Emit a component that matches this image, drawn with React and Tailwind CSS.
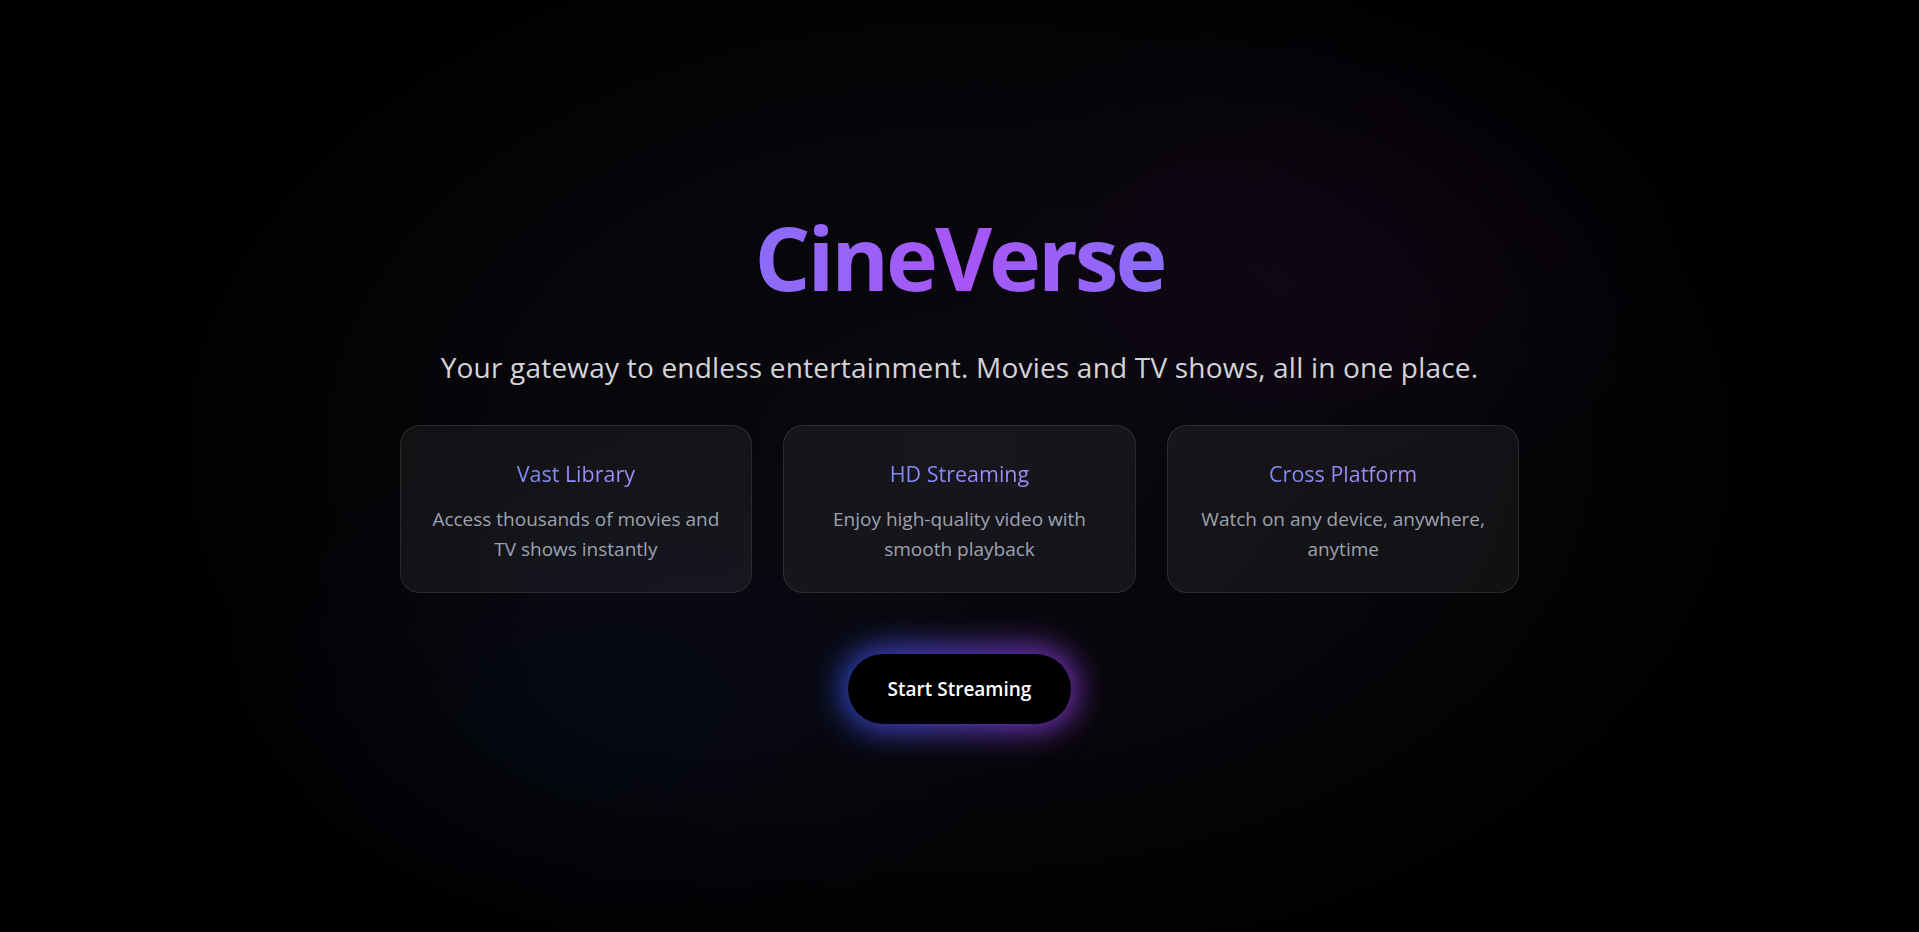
export default function App() {
  const features = [
    { title: "Vast Library", desc: "Access thousands of movies and TV shows instantly" },
    { title: "HD Streaming", desc: "Enjoy high-quality video with smooth playback" },
    { title: "Cross Platform", desc: "Watch on any device, anywhere, anytime" },
  ];
  return (
    <div className="min-h-screen w-full bg-black bg-[image:radial-gradient(ellipse_28%_38%_at_68%_28%,rgba(70,15,90,0.14),transparent_70%),radial-gradient(ellipse_30%_40%_at_32%_75%,rgba(20,45,110,0.12),transparent_70%),radial-gradient(ellipse_45%_62%_at_50%_48%,#0a0910_0%,#060509_55%,#000_100%)] flex items-center justify-center font-['Open_Sans',sans-serif]">
      <div className="flex flex-col items-center w-[1120px]">
        <h1 className="text-[88px] leading-none font-bold tracking-[-0.035em] bg-linear-to-r from-[#8a6cf7] via-[#a855f7] to-[#8a6cf7] bg-clip-text text-transparent pb-1 pt-1">
          CineVerse
        </h1>
        <p className="mt-11 text-[28px] leading-9 text-[#d4d4d8] tracking-[0.2px]">
          Your gateway to endless entertainment. Movies and TV shows, all in one place.
        </p>
        <div className="mt-10 grid grid-cols-3 gap-[31px] w-full">
          {features.map((f) => (
            <div
              key={f.title}
              className="rounded-[20px] border border-white/10 bg-white/[0.055] px-7 pt-[34px] pb-7 flex flex-col items-center text-center"
            >
              <h3 className="text-[21.5px] leading-7 bg-linear-to-r from-[#7e8ef8] to-[#a78bfa] bg-clip-text text-transparent">
                {f.title}
              </h3>
              <p className="mt-4 text-[19px] leading-[30px] text-[#9ca3af]">
                {f.desc}
              </p>
            </div>
          ))}
        </div>
        <div className="relative mt-[61px]">
          <div className="absolute -inset-1.5 rounded-full bg-linear-to-r from-[#2f5bff] to-[#a23cf0] blur-lg opacity-80"></div>
          <button className="relative rounded-full bg-black px-10 py-5 text-[19px] leading-[30px] font-semibold text-white">
            Start Streaming
          </button>
        </div>
      </div>
    </div>
  );
}
